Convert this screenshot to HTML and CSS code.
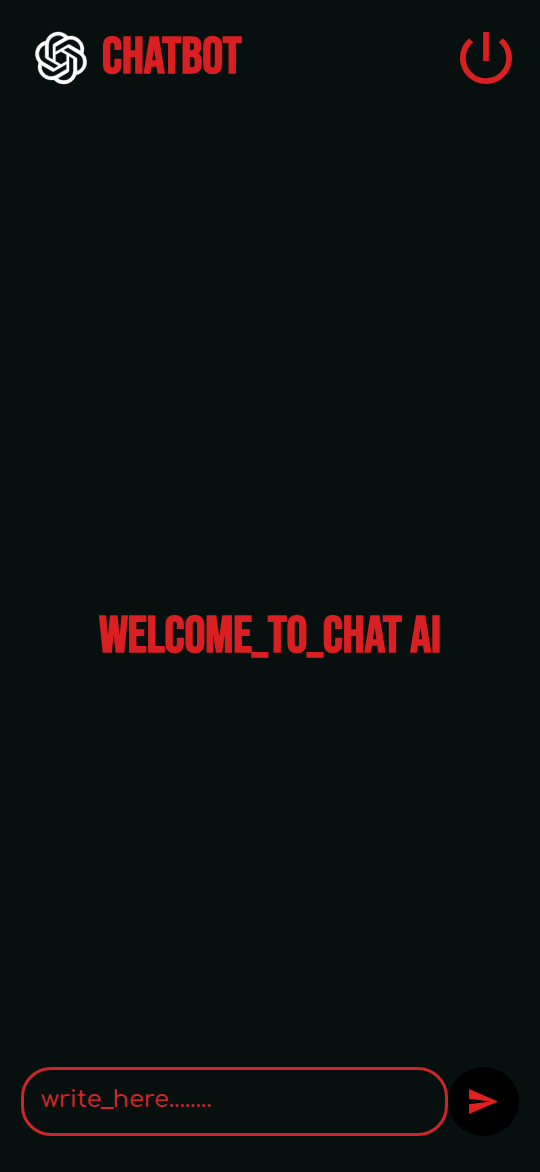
FILE: index.html
```html
<!DOCTYPE html>
<html lang="en">
<head>
<meta charset="utf-8">
<meta name="viewport" content="width=device-width, initial-scale=1">
<title>Chatbot</title>
<link rel="stylesheet" href="styles.css">
</head>
<body>
<div class="app">
  <header class="bar">
    <svg class="logo" viewBox="0 0 24 24" aria-hidden="true"><path d="M22.2819 9.8211a5.9847 5.9847 0 0 0-.5157-4.9108 6.0462 6.0462 0 0 0-6.5098-2.9A6.0651 6.0651 0 0 0 4.9807 4.1818a5.9847 5.9847 0 0 0-3.9977 2.9 6.0462 6.0462 0 0 0 .7427 7.0966 5.98 5.98 0 0 0 .511 4.9107 6.051 6.051 0 0 0 6.5146 2.9001A5.9847 5.9847 0 0 0 13.2599 24a6.0557 6.0557 0 0 0 5.7718-4.2058 5.9894 5.9894 0 0 0 3.9977-2.9001 6.0557 6.0557 0 0 0-.7475-7.0729zm-9.022 12.6081a4.4755 4.4755 0 0 1-2.8764-1.0408l.1419-.0804 4.7783-2.7582a.7948.7948 0 0 0 .3927-.6813v-6.7369l2.02 1.1686a.071.071 0 0 1 .038.052v5.5826a4.504 4.504 0 0 1-4.4945 4.4944zm-9.6607-4.1254a4.4708 4.4708 0 0 1-.5346-3.0137l.142.0852 4.783 2.7582a.7712.7712 0 0 0 .7806 0l5.8428-3.3685v2.3324a.0804.0804 0 0 1-.0332.0615L9.74 19.9502a4.4992 4.4992 0 0 1-6.1408-1.6464zM2.3408 7.8956a4.485 4.485 0 0 1 2.3655-1.9728V11.6a.7664.7664 0 0 0 .3879.6765l5.8144 3.3543-2.0201 1.1685a.0757.0757 0 0 1-.071 0l-4.8303-2.7865A4.504 4.504 0 0 1 2.3408 7.872zm16.5963 3.8558L13.1038 8.364 15.1192 7.2a.0757.0757 0 0 1 .071 0l4.8303 2.7913a4.4944 4.4944 0 0 1-.6765 8.1042v-5.6772a.79.79 0 0 0-.407-.667zm2.0107-3.0231l-.142-.0852-4.7735-2.7818a.7759.7759 0 0 0-.7854 0L9.409 9.2297V6.8974a.0662.0662 0 0 1 .0284-.0615l4.8303-2.7866a4.4992 4.4992 0 0 1 6.6802 4.66zM8.3065 12.863l-2.02-1.1638a.0804.0804 0 0 1-.038-.0567V6.0742a4.4992 4.4992 0 0 1 7.3757-3.4537l-.142.0805L8.704 5.459a.7948.7948 0 0 0-.3927.6813zm1.0976-2.3654l2.602-1.4998 2.6069 1.4998v2.9994l-2.5974 1.4997-2.6067-1.4997Z"/></svg>
    <h1 class="display">CHATBOT</h1>
    <button class="power" type="button" aria-label="Power">
      <svg viewBox="3 3 18 18" aria-hidden="true"><path d="M13 3h-2v10h2V3zm4.83 2.17l-1.42 1.42C17.99 7.86 19 9.81 19 12c0 3.87-3.13 7-7 7s-7-3.13-7-7c0-2.19 1.01-4.14 2.58-5.42L6.17 5.17C4.23 6.82 3 9.26 3 12c0 4.97 4.03 9 9 9s9-4.03 9-9c0-2.74-1.23-5.18-3.17-6.83z"/></svg>
    </button>
  </header>
  <main class="welcome">
    <p class="display">WELCOME_TO_CHAT AI</p>
  </main>
  <form class="composer">
    <input class="message" type="text" aria-label="Message" placeholder="write_here........">
    <button class="send" type="button" aria-label="Send">
      <svg viewBox="2 3 21 18" aria-hidden="true"><path d="M2.01 21L23 12 2.01 3 2 10l15 2-15 2z"/></svg>
    </button>
  </form>
</div>
</body>
</html>
```
FILE: styles.css
```css
* {
  box-sizing: border-box;
}

body {
  margin: 0;
  background: #07100f;
  color: #d91f22;
}

.app {
  display: flex;
  flex-direction: column;
  min-height: 100vh;
}

.bar {
  display: flex;
  align-items: center;
  gap: 15px;
  padding: 28px 28px 28px 35px;
}

.logo {
  width: 52px;
  height: 54px;
  fill: #fff;
  stroke: #fff;
  stroke-width: 0.2;
  overflow: visible;
}

.display {
  margin: 0;
  font-family: "Bebas Neue", "Liberation Sans Narrow", "Roboto Condensed", sans-serif;
  font-size: 52px;
  font-weight: 700;
  line-height: 60px;
  white-space: nowrap;
}

.power {
  margin-left: auto;
  padding: 0;
  border: 0;
  background: none;
}

.power svg {
  display: block;
  width: 52px;
  height: 52px;
  fill: #d91f22;
}

.welcome {
  display: flex;
  flex: 1;
  align-items: center;
  justify-content: center;
  padding-top: 90px;
}

.composer {
  display: flex;
  align-items: center;
  padding: 0 21px 36px;
}

.message {
  flex: 1;
  min-width: 0;
  height: 69px;
  padding: 0 17px 4px;
  border: 3px solid #cb2629;
  border-radius: 30px;
  background: transparent;
  color: #d12629;
  font-family: Comfortaa, Quicksand, Lato, sans-serif;
  font-size: 24px;
  font-weight: 500;
}

.message::placeholder {
  color: #d12629;
  opacity: 1;
}

.send {
  display: flex;
  align-items: center;
  justify-content: center;
  width: 71px;
  height: 69px;
  padding: 0;
  border: 0;
  border-radius: 50%;
  background: #000;
}

.send svg {
  width: 29px;
  height: 25px;
  fill: #e0201f;
}
```
